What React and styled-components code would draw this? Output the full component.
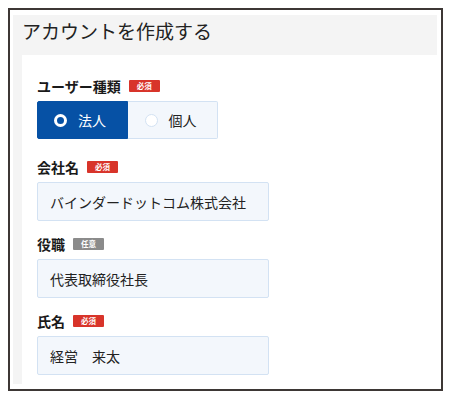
import React from "react"
import styled, { createGlobalStyle } from "styled-components"

const GlobalStyle = createGlobalStyle`
  body {
    margin: 0;
    background: #fff;
    font-family: "Noto Sans CJK JP", "Noto Sans", sans-serif;
    color: #222;
  }
`;

const Frame = styled.div`
  margin: 8px;
  width: 435px;
  height: 383px;
  box-sizing: border-box;
  border: 2px solid #3d3735;
  padding: 5px 4px 5px 3px;
  background: #fff;
  overflow: hidden;
`;

const Card = styled.div`
  background: #f4f4f4;
  height: 100%;
  display: flex;
  flex-direction: column;
  padding-left: 9px;
`;

const Header = styled.h1`
  flex-shrink: 0;
  margin: 0;
  height: 40px;
  box-sizing: border-box;
  padding-top: 1px;
  font-size: 19px;
  font-weight: 400;
  line-height: 30px;
  color: #222;
`;

const Body = styled.div`
  flex: 1;
  min-height: 0;
  overflow: hidden;
  background: #fff;
  padding: 21px 15px 0;
`;

const Field = styled.div`
  margin-bottom: ${p => (p.$extra ? 18 : 13)}px;
  &:last-child {
    margin-bottom: 0;
  }
`;

const LabelRow = styled.div`
  display: flex;
  align-items: center;
  gap: 8px;
  height: 20px;
  margin-bottom: 5px;
`;

const Label = styled.span`
  font-size: 14px;
  font-weight: 700;
  line-height: 20px;
  color: #1a1a1a;
`;

const Badge = styled.span`
  display: inline-block;
  width: 31px;
  height: 12px;
  line-height: 12px;
  text-align: center;
  font-size: 7.5px;
  font-weight: 700;
  color: #fff;
  border-radius: 1px;
  background: ${p => (p.$optional ? "#8b8b8b" : "#d8342a")};
`;

const RadioGroup = styled.div`
  display: flex;
  width: 181px;
  height: 38px;
`;

const RadioOption = styled.div`
  flex: 1;
  display: flex;
  align-items: center;
  gap: 11px;
  padding-left: ${p => (p.$checked ? 16 : 17)}px;
  box-sizing: border-box;
  font-size: 14px;
  border-radius: ${p => (p.$checked ? "2px 0 0 2px" : "0 2px 2px 0")};
  background: ${p => (p.$checked ? "#0651a5" : "#f3f7fc")};
  color: ${p => (p.$checked ? "#fff" : "#222")};
  border: 1px solid ${p => (p.$checked ? "#0651a5" : "#d3e2f3")};
  border-left: ${p => (p.$checked ? "1px solid #0651a5" : "none")};
`;

const Dot = styled.span`
  width: 13px;
  height: 13px;
  box-sizing: border-box;
  border-radius: 50%;
  background: ${p => (p.$checked ? "#0651a5" : "#fff")};
  border: ${p => (p.$checked ? "3px solid #fff" : "1px solid #d3e2f3")};
`;

const Input = styled.div`
  width: 232px;
  height: 39px;
  box-sizing: border-box;
  display: flex;
  align-items: center;
  padding-left: 12px;
  font-size: 14px;
  color: #222;
  background: #f3f7fc;
  border: 1px solid #d3e2f3;
  border-radius: 2px;
`;

const fields = [
  { label: "会社名", value: "バインダードットコム株式会社" },
  { label: "役職", value: "代表取締役社長", optional: true },
  { label: "氏名", value: "経営　来太" },
];

function App() {
  return (
    <>
      <GlobalStyle />
      <Frame>
        <Card>
          <Header>アカウントを作成する</Header>
          <Body>
            <Field $extra>
              <LabelRow>
                <Label>ユーザー種類</Label>
                <Badge>必須</Badge>
              </LabelRow>
              <RadioGroup>
                <RadioOption $checked>
                  <Dot $checked />
                  法人
                </RadioOption>
                <RadioOption>
                  <Dot />
                  個人
                </RadioOption>
              </RadioGroup>
            </Field>
            {fields.map(f => (
              <Field key={f.label}>
                <LabelRow>
                  <Label>{f.label}</Label>
                  <Badge $optional={f.optional}>{f.optional ? "任意" : "必須"}</Badge>
                </LabelRow>
                <Input>{f.value}</Input>
              </Field>
            ))}
          </Body>
        </Card>
      </Frame>
    </>
  );
}

export default App;
